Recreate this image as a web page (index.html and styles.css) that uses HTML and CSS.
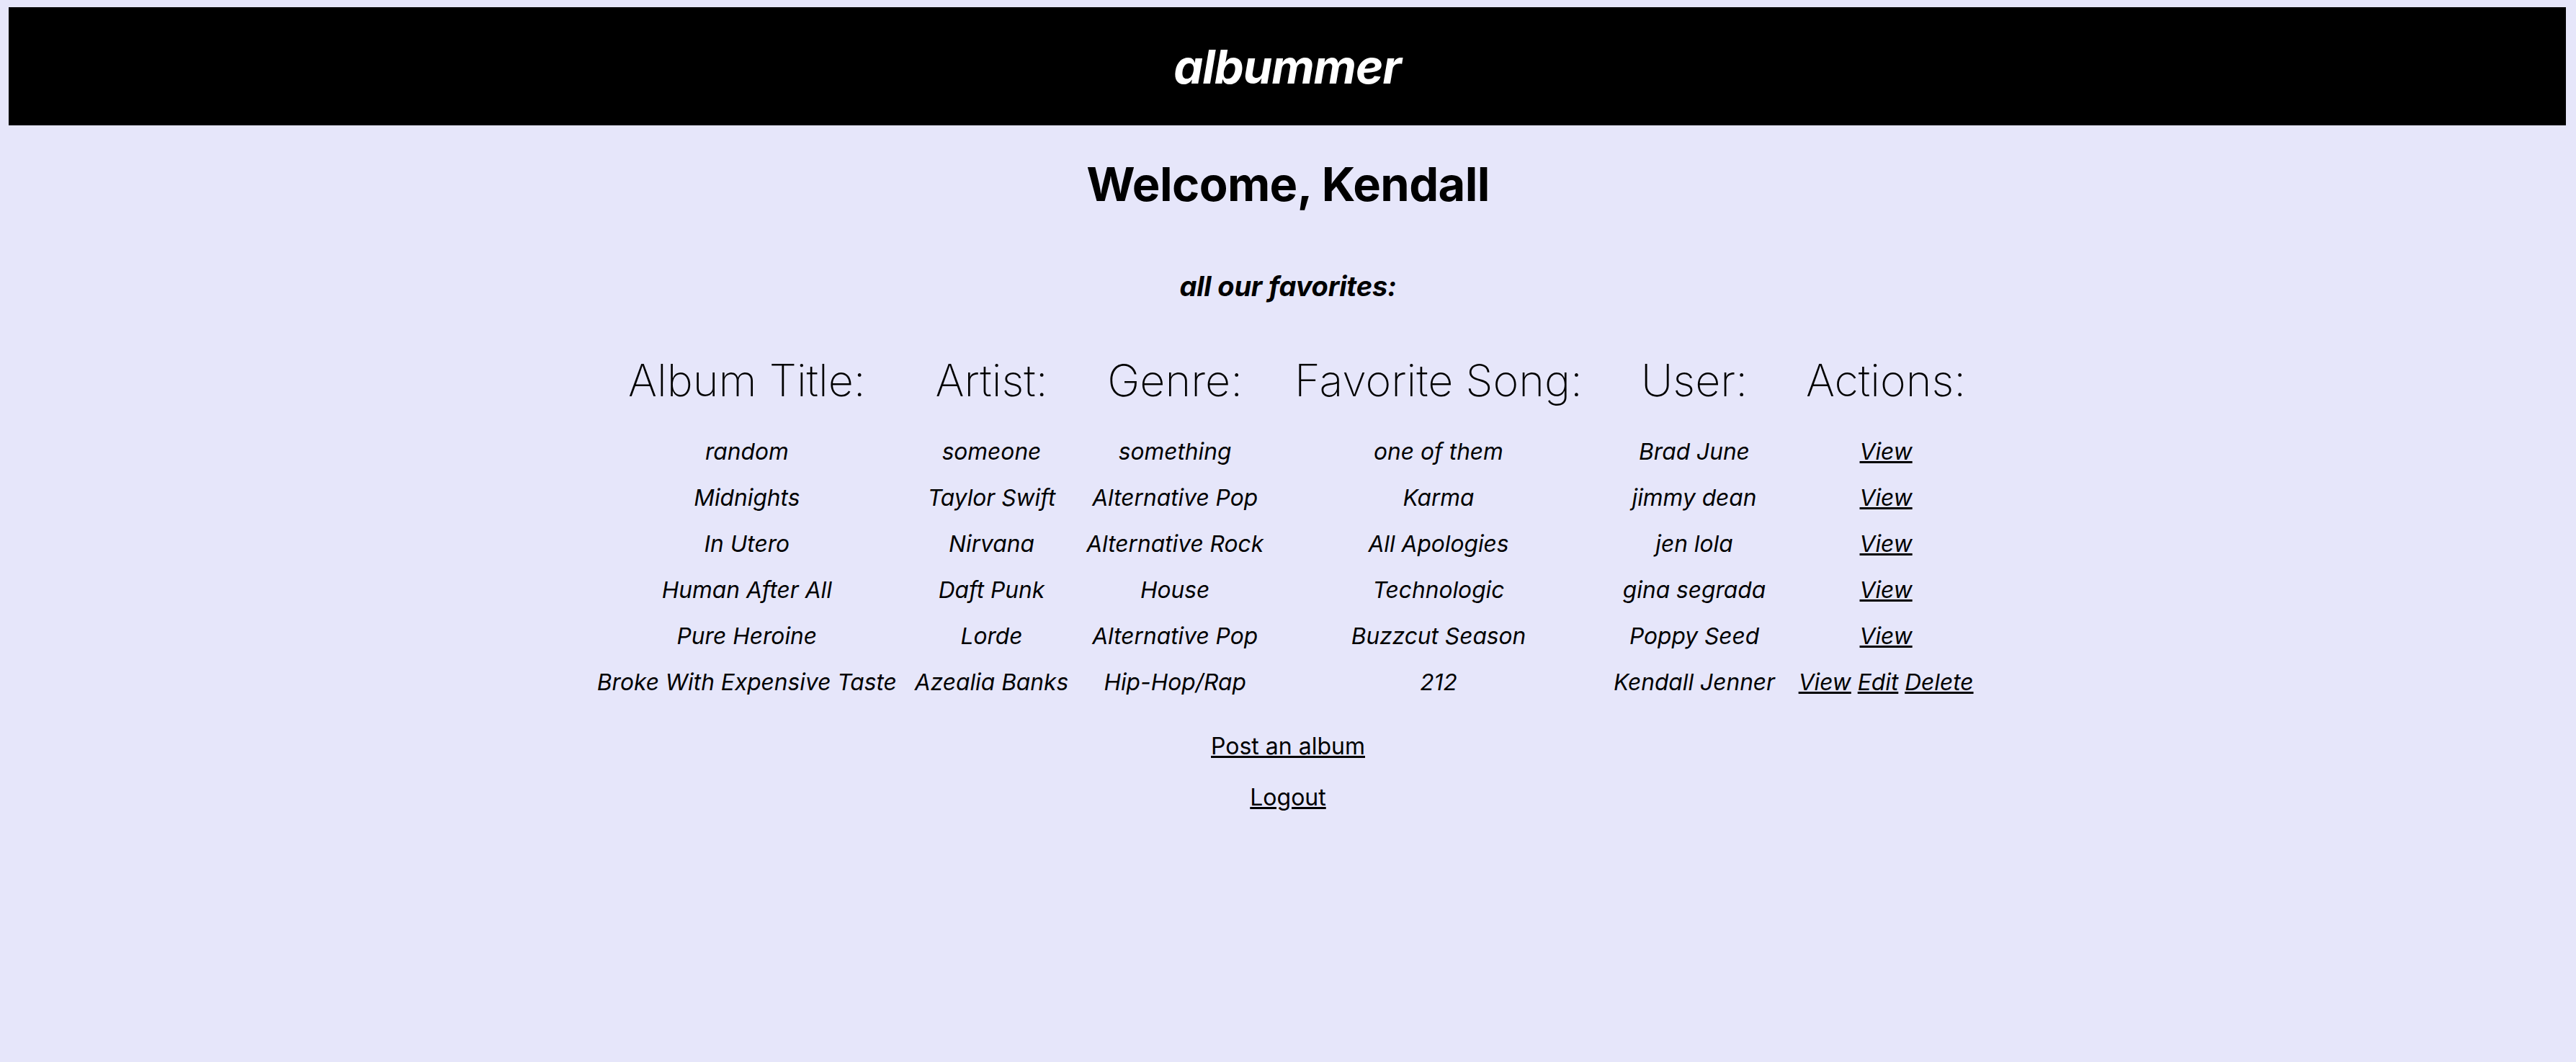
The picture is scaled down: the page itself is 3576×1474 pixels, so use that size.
FILE: index.html
```html
<!DOCTYPE html>
<html lang="en">
<head>
<meta charset="utf-8">
<title>albummer</title>
<link rel="stylesheet" href="styles.css">
</head>
<body>
<header class="topbar">
  <span class="brand">albummer</span>
</header>
<main class="content">
  <h1 class="welcome">Welcome, Kendall</h1>
  <h3 class="subtitle">all our favorites:</h3>
  <table class="albums">
    <thead>
      <tr>
        <th>Album Title:</th>
        <th>Artist:</th>
        <th>Genre:</th>
        <th>Favorite Song:</th>
        <th>User:</th>
        <th>Actions:</th>
      </tr>
    </thead>
    <tbody>
      <tr><td>random</td><td>someone</td><td>something</td><td>one of them</td><td>Brad June</td><td><a href="#">View</a></td></tr>
      <tr><td>Midnights</td><td>Taylor Swift</td><td>Alternative Pop</td><td>Karma</td><td>jimmy dean</td><td><a href="#">View</a></td></tr>
      <tr><td>In Utero</td><td>Nirvana</td><td>Alternative Rock</td><td>All Apologies</td><td>jen lola</td><td><a href="#">View</a></td></tr>
      <tr><td>Human After All</td><td>Daft Punk</td><td>House</td><td>Technologic</td><td>gina segrada</td><td><a href="#">View</a></td></tr>
      <tr><td>Pure Heroine</td><td>Lorde</td><td>Alternative Pop</td><td>Buzzcut Season</td><td>Poppy Seed</td><td><a href="#">View</a></td></tr>
      <tr><td>Broke With Expensive Taste</td><td>Azealia Banks</td><td>Hip-Hop/Rap</td><td>212</td><td>Kendall Jenner</td><td><a href="#">View</a> <a href="#">Edit</a> <a href="#">Delete</a></td></tr>
    </tbody>
  </table>
  <p class="link-line"><a href="#">Post an album</a></p>
  <p class="link-line logout"><a href="#">Logout</a></p>
</main>
</body>
</html>
```
FILE: styles.css
```css
html, body {
  margin: 0;
  padding: 0;
}
body {
  background: #e6e6fa;
  color: #000;
  font-family: Inter, "Noto Sans", sans-serif;
  min-height: 1474px;
}
.topbar {
  margin: 10px 14px 0 12px;
  height: 164px;
  background: #000;
  display: flex;
  align-items: center;
  justify-content: center;
}
.brand {
  color: #fff;
  font-weight: 700;
  font-style: italic;
  font-size: 65px;
  letter-spacing: -1px;
}
.content {
  text-align: center;
}
.welcome {
  margin: 42px 0 0;
  font-size: 65px;
  font-weight: 700;
  line-height: 80px;
  letter-spacing: -0.6px;
}
.subtitle {
  margin: 79px 0 0;
  font-size: 38px;
  font-weight: 700;
  font-style: italic;
  line-height: 45px;
  letter-spacing: -0.2px;
}
.albums {
  margin: 71px auto 0;
  border-collapse: separate;
  border-spacing: 5px 0;
}
.albums th {
  font-size: 61px;
  font-weight: 200;
  line-height: 75px;
  padding: 0 28px 29px;
}
.albums td {
  font-size: 31.7px;
  font-style: italic;
  line-height: 64px;
  padding: 0 10px;
  white-space: nowrap;
}
a {
  color: #000;
  text-decoration: underline;
}
.link-line {
  margin: 37px 0 0;
  font-size: 32px;
  line-height: 39px;
}
.link-line.logout {
  margin-top: 32px;
}
```
